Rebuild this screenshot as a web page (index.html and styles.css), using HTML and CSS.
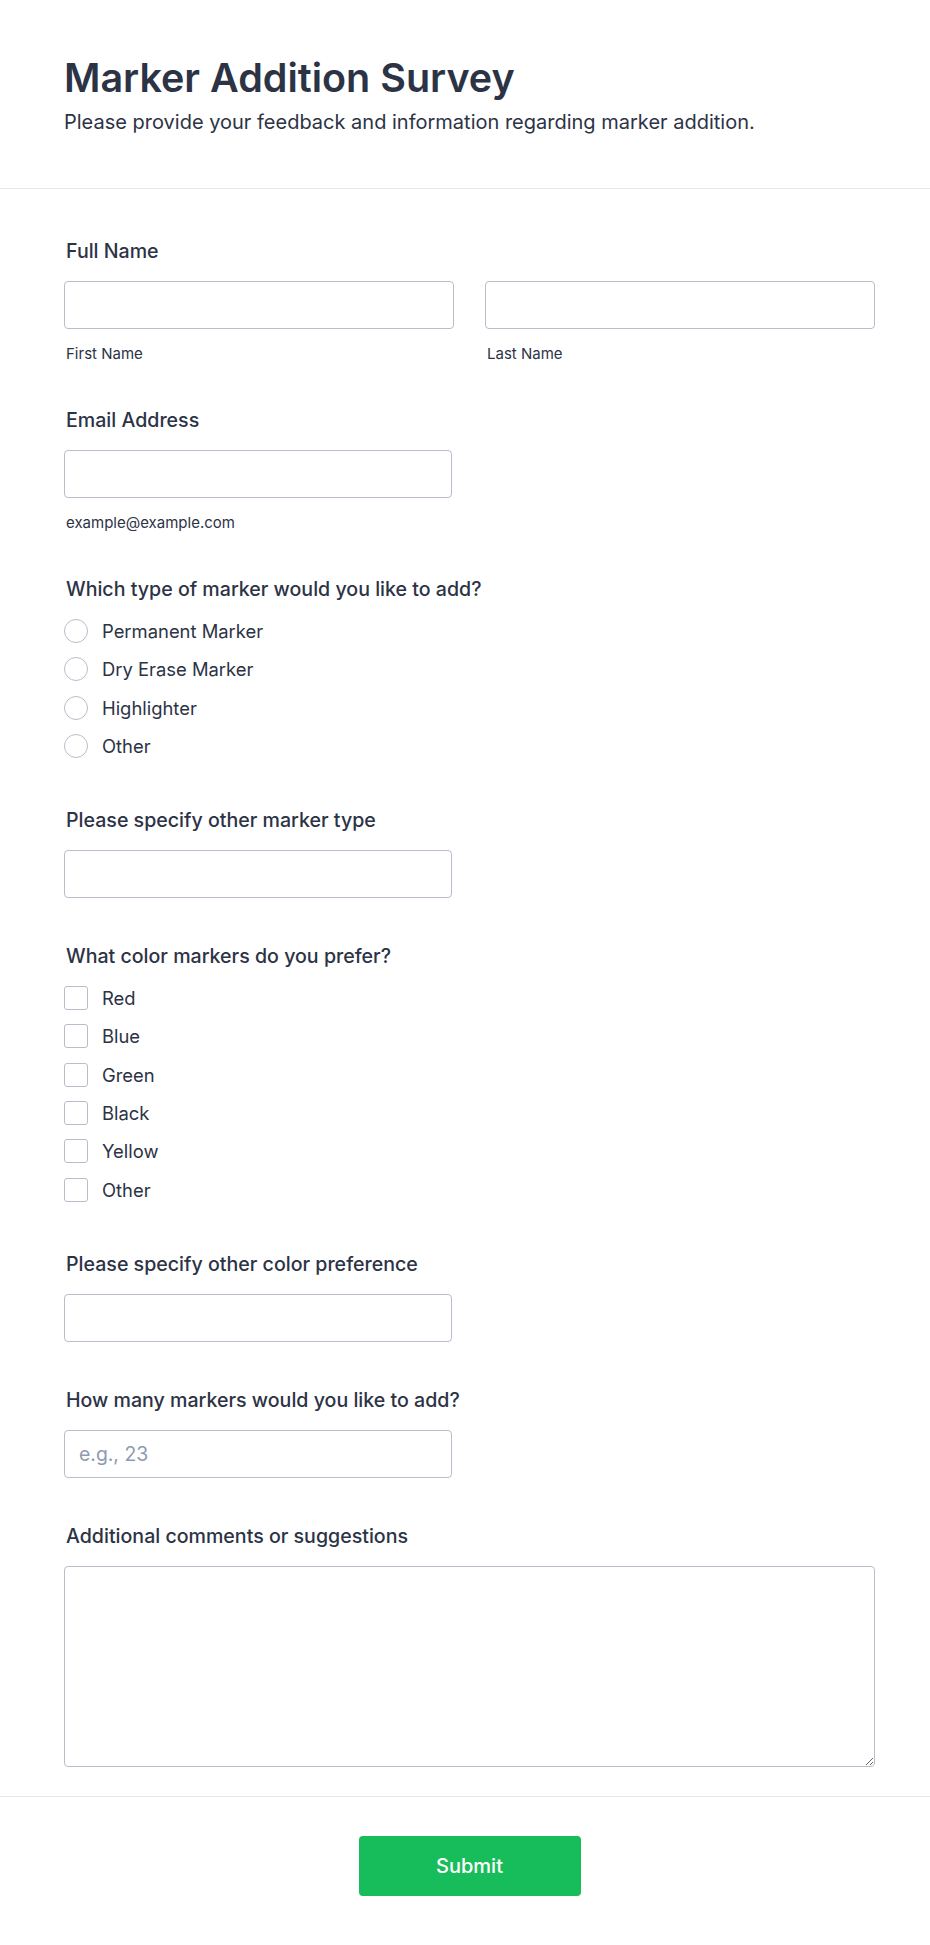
FILE: index.html
```html
<!DOCTYPE html>
<html lang="en">
<head>
 <meta charset="UTF-8">
 <title>Marker Addition Survey</title>
 <link rel="stylesheet" href="styles.css">
</head>
<body>

 <div class="header">
  <h1>Marker Addition Survey</h1>
  <p class="subtitle">Please provide your feedback and information regarding marker addition.</p>
 </div>

 <form class="survey" id="surveyForm">

  <div class="field">
   <label class="label">Full Name</label>
   <div class="name-row">
    <div class="name-col">
     <input type="text" class="input" id="firstName">
     <span class="sublabel">First Name</span>
    </div>
    <div class="name-col">
     <input type="text" class="input" id="lastName">
     <span class="sublabel">Last Name</span>
    </div>
   </div>
  </div>

  <div class="field">
   <label class="label" for="email">Email Address</label>
   <input type="email" class="input half" id="email">
   <span class="sublabel">example@example.com</span>
  </div>

  <div class="field">
   <span class="label">Which type of marker would you like to add?</span>
   <div class="options">
    <label class="option"><input type="radio" name="type"><span class="radio"></span>Permanent Marker</label>
    <label class="option"><input type="radio" name="type"><span class="radio"></span>Dry Erase Marker</label>
    <label class="option"><input type="radio" name="type"><span class="radio"></span>Highlighter</label>
    <label class="option"><input type="radio" name="type"><span class="radio"></span>Other</label>
   </div>
  </div>

  <div class="field">
   <label class="label" for="otherType">Please specify other marker type</label>
   <input type="text" class="input half" id="otherType">
  </div>

  <div class="field">
   <span class="label">What color markers do you prefer?</span>
   <div class="options">
    <label class="option"><input type="checkbox"><span class="check"></span>Red</label>
    <label class="option"><input type="checkbox"><span class="check"></span>Blue</label>
    <label class="option"><input type="checkbox"><span class="check"></span>Green</label>
    <label class="option"><input type="checkbox"><span class="check"></span>Black</label>
    <label class="option"><input type="checkbox"><span class="check"></span>Yellow</label>
    <label class="option"><input type="checkbox"><span class="check"></span>Other</label>
   </div>
  </div>

  <div class="field">
   <label class="label" for="otherColor">Please specify other color preference</label>
   <input type="text" class="input half" id="otherColor">
  </div>

  <div class="field">
   <label class="label" for="quantity">How many markers would you like to add?</label>
   <input type="number" class="input half" id="quantity" placeholder="e.g., 23">
  </div>

  <div class="field">
   <label class="label" for="comments">Additional comments or suggestions</label>
   <textarea class="textarea" id="comments"></textarea>
  </div>

 </form>

 <div class="footer">
  <button type="submit" form="surveyForm" class="submit">Submit</button>
 </div>

</body>
</html>
```

FILE: styles.css
```css
 * {
   box-sizing: border-box;
  }

 body {
   font-family: Inter, "Noto Sans", Arial, sans-serif;
   margin: 0;
   background-color: #fff;
   color: #2c3345;
  }

 .header {
   padding: 54px 64px 53px;
   border-bottom: 1px solid #e3e5f0;
  }

  h1 {
   margin: 0;
   font-size: 39.5px;
   line-height: 48px;
   font-weight: 600;
  }

  .subtitle {
   margin: 8px 0 0;
   font-size: 20px;
   line-height: 25px;
  }

  .survey {
   width: 875px;
   padding: 50px 0 29px 64px;
   display: flex;
   flex-direction: column;
   gap: 46px;
  }

  .field {
   display: flex;
   flex-direction: column;
   align-items: flex-start;
  }

  .label {
   padding-left: 2px;
   font-size: 19.6px;
   line-height: 25px;
   font-weight: 500;
   margin-bottom: 17px;
  }

  .input {
   width: 390px;
   height: 48px;
   padding: 0 14px;
   border: 1px solid #b8bdc9;
   border-radius: 4px;
   font-family: inherit;
   font-size: 19.4px;
   color: #2c3345;
   background: #fff;
  }

  .input.half {
   width: 388px;
  }

  .input::placeholder {
   color: #8d9bb1;
  }

  .sublabel {
   padding-left: 2px;
   margin-top: 16px;
   font-size: 15px;
   line-height: 17px;
  }

  .name-row {
   display: flex;
   gap: 31px;
   width: 100%;
  }

  .name-col {
   display: flex;
   flex-direction: column;
   width: 390px;
  }

  .options {
   display: flex;
   flex-direction: column;
   gap: 14.33px;
   padding-bottom: 4px;
  }

  .option {
   display: flex;
   align-items: center;
   gap: 14px;
   height: 24px;
   font-size: 18.4px;
   cursor: pointer;
  }

  .option input {
   display: none;
  }

  .radio, .check {
   width: 24px;
   height: 24px;
   border: 1px solid #b8bdc9;
   background: #fff;
  }

  .radio {
   border-radius: 50%;
  }

  .check {
   border-radius: 3px;
  }

  .textarea {
   width: 811px;
   height: 201px;
   border: 1px solid #b8bdc9;
   border-radius: 4px;
   font-family: inherit;
   font-size: 18px;
  }

  .footer {
   width: 930px;
   padding: 39px 55px 49px 64px;
   border-top: 1px solid #e3e5f0;
   display: flex;
   justify-content: center;
  }

  .submit {
   width: 222px;
   height: 60px;
   border: none;
   border-radius: 4px;
   background-color: #18bd5b;
   color: #fff;
   font-family: inherit;
   font-size: 20px;
   font-weight: 500;
   cursor: pointer;
  }
```
